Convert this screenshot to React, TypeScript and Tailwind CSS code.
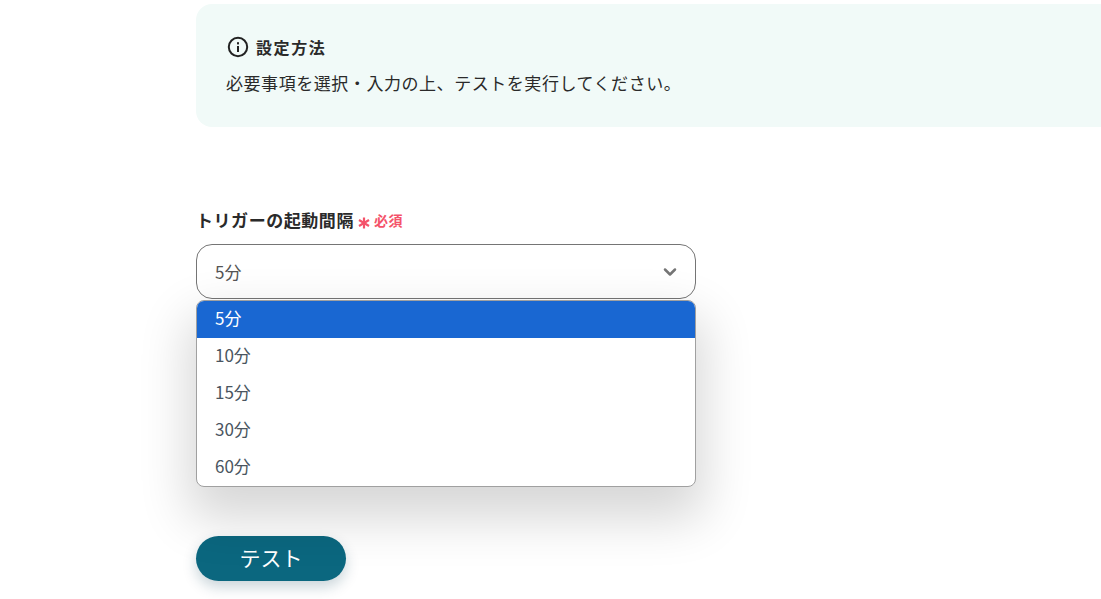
import React from "react";
import { ChevronDown } from "lucide-react";

const options = ["5分", "10分", "15分", "30分", "60分"];

const InfoIcon = () => (
	<svg width="22" height="22" viewBox="0 0 22 22" fill="none" className="shrink-0">
		<circle cx="11" cy="11" r="9.2" stroke="#222" strokeWidth="2" />
		<rect x="10" y="10" width="2" height="6" fill="#222" />
		<rect x="10" y="6.2" width="2" height="2.2" fill="#222" />
	</svg>
);

const RequiredMark = () => (
	<svg width="12" height="12" viewBox="0 0 12 12" stroke="#f4536a" strokeWidth="2.2" className="mt-[5px] ml-[4px] shrink-0">
		<line x1="6" y1="0.5" x2="6" y2="11.5" />
		<line x1="1" y1="3" x2="11" y2="9" />
		<line x1="11" y1="3" x2="1" y2="9" />
	</svg>
);

const App: React.FC = () => {
	return (
		<div
			className="h-[599px] w-[1101px] overflow-hidden bg-white pt-1 pl-[196px] text-[#2a2a2a]"
			style={{ fontFamily: '"Noto Sans CJK JP", "Noto Sans", sans-serif' }}
		>
			<div className="h-[123px] rounded-l-2xl bg-[#f1faf8] pt-[32px] pl-[30px]">
				<div className="flex h-[22px] items-center gap-[7px] pl-[1px]">
					<InfoIcon />
					<span className="text-[16px] font-bold tracking-[1.6px]">設定方法</span>
				</div>
				<p className="mt-[13px] text-[17px] leading-6 tracking-[0.55px]">
					必要事項を選択・入力の上、テストを実行してください。
				</p>
			</div>

			<div className="mt-[82px] flex h-[22px] items-center">
				<span className="text-[17px] font-bold tracking-[0.55px]">トリガーの起動間隔</span>
				<RequiredMark />
				<span className="ml-[4px] text-[14px] font-bold tracking-[0.5px] text-[#f4536a]">必須</span>
			</div>

			<div className="relative mt-[13px] w-[500px]">
				<div className="flex h-[55px] items-center justify-between rounded-2xl border border-[#757575] pr-[15px] pl-[18px] text-[17px] text-[#555]">
					<span>5分</span>
					<ChevronDown size={20} strokeWidth={3} className="text-[#757575]" />
				</div>

				<ul className="absolute top-[56px] left-0 w-full overflow-hidden rounded-lg border border-[#a0a0a0] bg-white text-[17px] text-[#4a5560] shadow-[0_24px_50px_8px_rgba(0,0,0,0.16)]">
					{options.map((o, i) => (
						<li
							key={o}
							className={
								i === 0
									? "flex h-[37px] items-center bg-[#1967d2] pb-[4px] pl-[18px] text-white"
									: "flex h-[37px] items-center pb-[4px] pl-[18px]"
							}
						>
							{o}
						</li>
					))}
				</ul>
			</div>

			<button className="mt-[237px] h-[45px] w-[150px] rounded-full bg-[#0b677f] pb-[2px] text-[21px] text-white shadow-[0_6px_14px_rgba(11,60,80,0.22)]">
				テスト
			</button>
		</div>
	);
};

export default App;
